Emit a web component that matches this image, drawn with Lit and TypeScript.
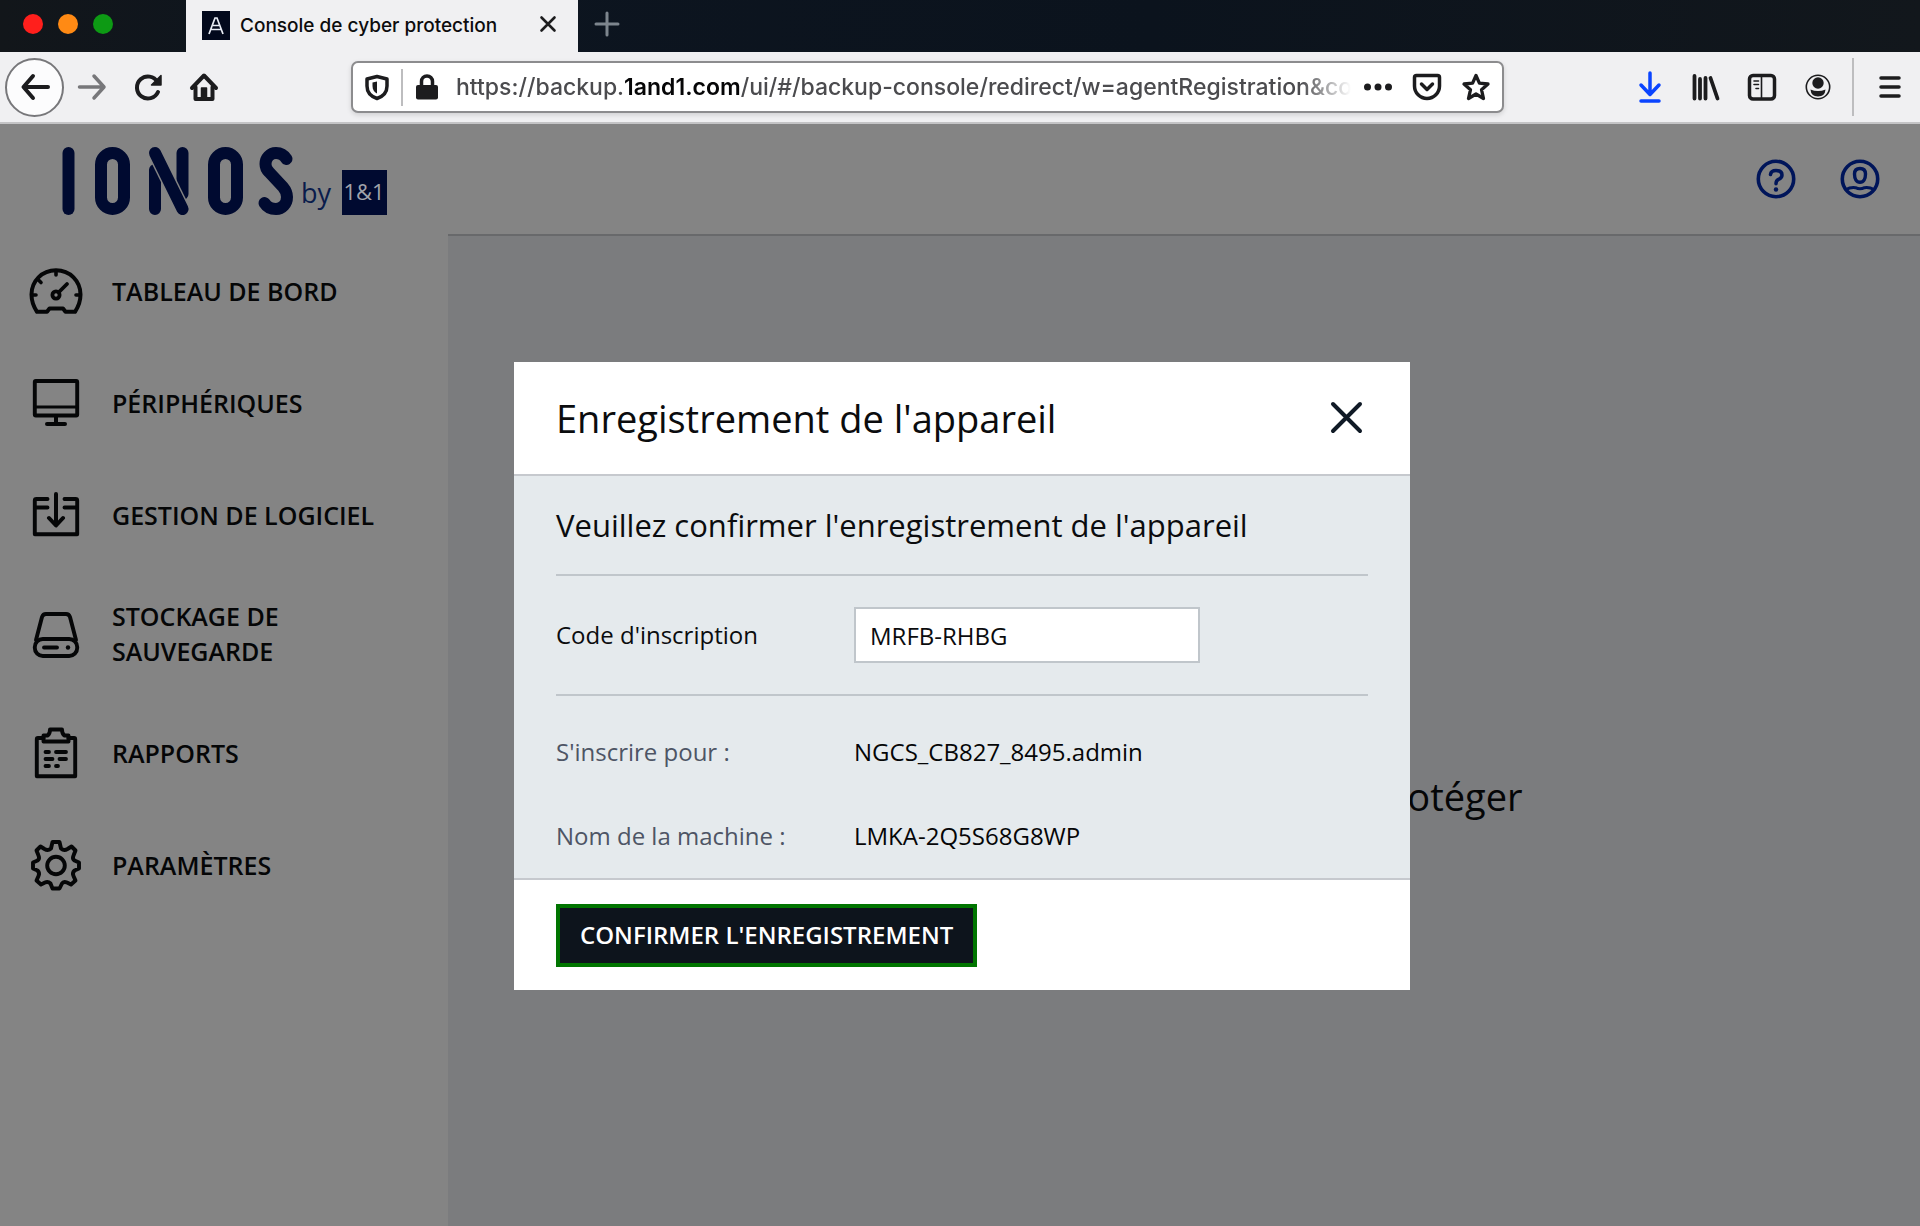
import { LitElement, html, css, svg } from "lit";
import { customElement, state } from "lit/decorators.js";

const icons = {
  back: svg`<path d="M27 14H3M12 3 2.500 14 12 25" stroke-width="4"/>`,
  forward: svg`<path d="M1.500 14H25M16 3 26 14 16 25" stroke-width="3.500"/>`,
  reload: svg`<path d="M24 19A11 11 0 1 1 23.500 9" stroke-width="4"/><path d="M27 2.500V12H17.500Z" fill="currentColor" stroke-width="1.500"/>`,
  home: svg`<path d="M2 15 14 2.500 26 15" stroke-width="4"/><path d="M5.500 14V26H22.500V14" stroke-width="4"/><path d="M11.500 26V15H16.500V26" fill="currentColor" stroke-width="1.500"/>`,
  shield: svg`<path d="M14 3.500 24 6V13C24 19 20 23.500 14 25.500 8 23.500 4 19 4 13V6Z" stroke-width="3.500"/><path d="M14 8.500 9.500 9.500V13C9.500 16.500 11 19 14 20.500Z" fill="currentColor" stroke="none"/>`,
  lock: svg`<rect x="3" y="12" width="22" height="14.500" rx="2" fill="currentColor" stroke="none"/><path d="M8.500 13V8.500A5.500 5.500 0 0 1 19.500 8.500V13" stroke-width="3.500"/>`,
  dots: svg`<g fill="currentColor" stroke="none"><circle cx="3.500" cy="14" r="3.500"/><circle cx="14" cy="14" r="3.500"/><circle cx="24.500" cy="14" r="3.500"/></g>`,
  pocket: svg`<path d="M3.500 2.500H24.500Q26.500 2.500 26.500 4.500V13A12.500 12.500 0 0 1 1.500 13V4.500Q1.500 2.500 3.500 2.500Z" stroke-width="3.500"/><path d="M8.500 11 14 16.500 19.500 11" stroke-width="3.500"/>`,
  star: svg`<path d="M14 2.500 17.400 10.200 26 11 19.500 16.700 21.500 25.500 14 21 6.500 25.500 8.500 16.700 2 11 10.600 10.200Z" stroke-width="3.300"/>`,
  download: svg`<path d="M14 0V20M5 12 14 21.500 23 12M5 28H23" stroke-width="3.500"/>`,
  library: svg`<path d="M2.500 3V25.500M8 6V25.500M13.500 5V25.500M18.500 5 25.500 25.500" stroke-width="3.800"/>`,
  sidebar: svg`<rect x="1.500" y="2.500" width="25" height="23.500" rx="3.500" stroke-width="3.500"/><path d="M13.500 3V26" stroke-width="1.600"/><path d="M6 8H10.500M6 11.500H10.500M8 15.500H10.500" stroke-width="1.600"/>`,
  account: svg`<circle cx="14" cy="14" r="11.700" stroke-width="1.600"/><circle cx="14" cy="10" r="5.700" fill="currentColor" stroke="none"/><path d="M6.500 16.500Q10 18 14 18T21.500 16.500Q21 23.500 14 23.500T6.500 16.500Z" fill="currentColor" stroke="none"/>`,
  menu: svg`<path d="M5 5H23M5 14H23M5 23H23" stroke-width="3.500"/>`,
  close: svg`<path d="M7.500 6.500 20.500 19.500M20.500 6.500 7.500 19.500" stroke-width="2.600"/>`,
  plus: svg`<path d="M14 3V25M3 14H25" stroke-width="3"/>`,
  help: svg`<circle cx="20" cy="20" r="17.700" stroke-width="3.600"/><path d="M14.500 15.500Q15 11.500 20 11.500 26 11.500 26 16 26 19 22.500 20.300 20 21.500 20 24.800" stroke-width="3.500"/><circle cx="20" cy="30.500" r="2.200" fill="currentColor" stroke="none"/>`,
  user: svg`<circle cx="20" cy="20" r="17.700" stroke-width="3.600"/><path d="M20 9.500C23.500 9.500 25.500 11.500 25.500 15 25.500 20 23.500 23.300 20 23.300S14.500 20 14.500 15C14.500 11.500 16.500 9.500 20 9.500Z" stroke-width="3.400"/><path d="M6 30.500Q10.500 28 15.500 28.700 20 31 24.500 28.700 29.500 28 34 30.500" stroke-width="3"/>`,
  dashboard: svg`<path d="M28 7.200C42 7.200 52.500 18 52.500 31.500 52.500 38 50.500 43.500 47 48.800H37.500L35 45.500H21.500L19 48.800H9C5.500 43.500 3.500 38 3.500 31.500 3.500 18 14 7.200 28 7.200Z" stroke-width="4"/><path d="M28 8V12M10 16.500 13 19.500M4 32H8M48 32H52" stroke-width="3.600"/><circle cx="28" cy="32" r="3.600" stroke-width="3.800"/><path d="M31 29 39 21" stroke-width="3.800"/>`,
  devices: svg`<rect x="6.800" y="6" width="42.400" height="34.500" rx="1" stroke-width="3.900"/><path d="M7 32H49" stroke-width="3"/><path d="M28 41V49M19 49H37" stroke-width="4"/>`,
  software: svg`<path d="M19.500 12H8.500Q6.800 12 6.800 13.500V47.200H49.200V13.500Q49.200 12 47.500 12H36.500M7 20.500H19.500M36.500 20.500H49" stroke-width="3.900"/><path d="M28 7V37M21 31 28 38.500 35 31" stroke-width="4"/>`,
  storage: svg`<path d="M8 34 14 11Q15 8 18 8H38Q41 8 42 11L48 34" stroke-width="3.900"/><rect x="6.800" y="33" width="42.400" height="17" rx="8" stroke-width="3.900"/><path d="M16 41.500H29" stroke-width="3.800"/><circle cx="40" cy="41.500" r="2.200" fill="currentColor" stroke="none"/>`,
  reports: svg`<path d="M15.500 13H10Q8.800 13 8.800 14.200V51.200H47.200V14.200Q47.200 13 46 13H40.500" stroke-width="3.900"/><path d="M15.500 16.500V10.500H19.500Q22 9 22 4.500H34Q34 9 36.500 10.500H40.500V16.500Z" stroke-width="3.900"/><path d="M17.500 27H21M28 27H38M17.500 34H24.500M31.500 34H38M17.500 41H21M28 41H30" stroke-width="3.800"/>`,
  settings: svg`<path d="M24.500 5H31.500L33 11.500Q36 14 39.500 12L43.500 9.500 47.500 13.500 45.500 18.500Q44 22 46.500 23.500L51 25.500V31.500L46.500 33.500Q44 36 45.500 39L47.500 43.500 43 47.500 39 45.500Q35.500 44 34 46.500L31.500 51.500H24.500L22.500 46.500Q20 44 17 45.500L13 47.500 8.500 43.500 10.500 39Q12 36 9.500 33.500L5 31.500V25.500L9.500 23.500Q12 22 10.500 18.500L8.500 13.500 12.500 9.500 16.500 12Q20 14 23 11.500Z" stroke-width="3.900"/><circle cx="28" cy="28.500" r="8.800" stroke-width="3.900"/>`,
};

type IconName = keyof typeof icons;

function icon(name: IconName, size = 28) {
  return html`<svg class="icon" width=${size} height=${size} viewBox="0 0 ${size} ${size}" aria-hidden="true">${icons[name]}</svg>`;
}

const navItems: { icon: IconName; label: string }[] = [
  { icon: "dashboard", label: "TABLEAU DE BORD" },
  { icon: "devices", label: "PÉRIPHÉRIQUES" },
  { icon: "software", label: "GESTION DE LOGICIEL" },
  { icon: "storage", label: "STOCKAGE DE SAUVEGARDE" },
  { icon: "reports", label: "RAPPORTS" },
  { icon: "settings", label: "PARAMÈTRES" },
];

const iconStyles = css`
  * { box-sizing: border-box; }
  .icon { display: block; flex: none; fill: none; stroke: currentColor; stroke-linecap: round; stroke-linejoin: round; overflow: visible; }
  button { display: flex; align-items: center; justify-content: center; padding: 0; border: 0; background: none; color: inherit; font: inherit; cursor: pointer; }
`;

@customElement("browser-chrome")
class BrowserChrome extends LitElement {
  static styles = [
    iconStyles,
    css`
      :host { display: block; flex: none; font-family: Inter, "Liberation Sans", sans-serif; color: #1c1c1e; }
      .strip { display: flex; align-items: stretch; height: 52px; background: linear-gradient(90deg, #12161a, #0d1520 20%, #0b131d 60%, #12171c); }
      .lights { display: flex; align-items: center; gap: 15px; width: 186px; padding: 0 0 4px 23px; }
      .light { width: 20px; height: 20px; border-radius: 50%; }
      .red { background: #ff1f1c; }
      .amber { background: #ff8a14; }
      .green { background: #0d9a14; }
      .tab { display: flex; align-items: center; width: 392px; padding: 0 16px 2px; gap: 10px; background: #f0f0f2; }
      .title { flex: 1; font-size: 19px; font-weight: 500; white-space: nowrap; color: #0c0c0d; }
      .new { width: 58px; padding-bottom: 4px; color: #7d858d; }
      .bar { display: flex; align-items: center; height: 72px; background: #f0f0f2; border-bottom: 2px solid #c4c4c6; padding: 0 16px 0 5px; }
      .back { width: 59px; height: 59px; border: 2px solid #77777a; border-radius: 50%; background: #fcfcfd; }
      .tools { display: flex; flex: none; align-items: center; gap: 28px; }
      .history { width: 346px; gap: 0; }
      .step { width: 56px; height: 56px; }
      .disabled { color: #77777a; }
      .address { display: flex; align-items: center; flex: 1; min-width: 0; height: 52px; padding: 0 12px 0 10px; border: 2px solid #8c8c8e; border-radius: 7px; background: #fff; box-shadow: 0 2px 5px #0002; }
      .split { width: 2px; height: 37px; margin: 0 10px; background: #bdbdbf; }
      .url { flex: 1; min-width: 0; margin: 0 13px 0 15px; overflow: hidden; white-space: nowrap; font-size: 23px; font-weight: 500; color: #4b4b4e; outline: 0; -webkit-mask-image: linear-gradient(90deg, #000 calc(100% - 50px), transparent); mask-image: linear-gradient(90deg, #000 calc(100% - 50px), transparent); }
      .domain { font-weight: 600; color: #060607; }
      .inner { gap: 21px; }
      .right { padding-left: 132px; gap: 28px; }
      .download { color: #0a44ff; }
      .line { width: 2px; height: 58px; background: #bdbdbf; margin: 0 -6px 0 -8px; }
    `,
  ];

  render() {
    return html`
      <div class="strip">
        <div class="lights"><span class="light red"></span><span class="light amber"></span><span class="light green"></span></div>
        <div class="tab">
          <svg width="28" height="29" viewBox="0 0 28 29" aria-hidden="true">
            <rect width="28" height="29" fill="#02091c" />
            <path d="M7 23 13 7H15L21 23M9 18.500H19M11 14.500H17" fill="none" stroke="#e8ecf4" stroke-width="1.700" />
          </svg>
          <span class="title">Console de cyber protection</span>
          <button aria-label="Fermer l'onglet">${icon("close")}</button>
        </div>
        <button class="new" aria-label="Nouvel onglet">${icon("plus")}</button>
      </div>
      <div class="bar">
        <div class="tools history">
          <button class="back" aria-label="Précédent">${icon("back")}</button>
          <button class="step disabled" aria-label="Suivant">${icon("forward")}</button>
          <button class="step" aria-label="Actualiser">${icon("reload")}</button>
          <button class="step" aria-label="Accueil">${icon("home")}</button>
        </div>
        <div class="address">
          ${icon("shield")}<span class="split"></span>${icon("lock")}
          <div class="url" role="textbox" tabindex="0" aria-label="Adresse">https://backup.<span class="domain">1and1.com</span>/ui/#/backup-console/redirect/w=agentRegistration&amp;co</div>
          <div class="tools inner">
            <button aria-label="Actions">${icon("dots")}</button>
            <button aria-label="Pocket">${icon("pocket")}</button>
            <button aria-label="Marque-page">${icon("star")}</button>
          </div>
        </div>
        <div class="tools right">
          <button class="download" aria-label="Téléchargements">${icon("download")}</button>
          <button aria-label="Bibliothèque">${icon("library")}</button>
          <button aria-label="Panneau latéral">${icon("sidebar")}</button>
          <button aria-label="Compte">${icon("account")}</button>
          <span class="line"></span>
          <button aria-label="Menu">${icon("menu")}</button>
        </div>
      </div>
    `;
  }
}

@customElement("side-nav")
class SideNav extends LitElement {
  static styles = [
    iconStyles,
    css`
      :host { display: block; width: 448px; flex: none; background: #848484; }
      .logo { display: block; width: 448px; height: 111px; }
      .by { font: 500 27px "Open Sans", sans-serif; fill: #0a1c4c; }
      .badge { font: 500 22px "Open Sans", sans-serif; fill: #a0a3ab; }
      .item { display: flex; align-items: center; gap: 28px; min-height: 112px; padding: 28px 64px 28px 28px; color: #050607; font: 600 25px/35px "Open Sans", sans-serif; text-decoration: none; }
    `,
  ];

  render() {
    return html`
      <svg class="logo" viewBox="0 0 448 111" role="img" aria-label="IONOS by 1&amp;1">
        <g fill="none" stroke="#000a30" stroke-width="12" stroke-linecap="round" stroke-linejoin="round">
          <path d="M68.500 29V85" />
          <rect x="101" y="29" width="23" height="56" rx="11.500" />
          <path d="M155 46V85M182.500 29V70" />
          <path d="M155 29 182.500 85" stroke="#848484" stroke-width="15" stroke-linecap="butt" />
          <path d="M155 29 182.500 85" />
          <rect x="214" y="29" width="23" height="56" rx="11.500" />
          <path d="M286.500 35C284 31 280 29 276 29C270 29 265.500 34 265.500 40C265.500 43 267 46 269 48L283 63C285.500 66 287 69 287 73C287 80 282 85 276 85C271 85 267 83 264.500 79" />
        </g>
        <text class="by" x="301" y="79">by</text>
        <rect x="342" y="46" width="45" height="45" fill="#000a30" />
        <text class="badge" x="364" y="76" text-anchor="middle">1&amp;1</text>
      </svg>
      <nav>
        ${navItems.map((item) => html`<a class="item" href="#">${icon(item.icon, 56)}<span>${item.label}</span></a>`)}
      </nav>
    `;
  }
}

@customElement("registration-dialog")
class RegistrationDialog extends LitElement {
  @state() private code = "MRFB-RHBG";

  static styles = [
    iconStyles,
    css`
      :host { display: block; width: 896px; background: #fff; color: #0b0c0e; font: 500 24px/34px "Open Sans", sans-serif; }
      .head { display: flex; align-items: center; justify-content: space-between; height: 114px; padding: 0 42px; border-bottom: 2px solid #c6c9ce; }
      h1, h2, dl, dd { margin: 0; font-weight: 500; }
      h1 { font-size: 38px; line-height: 56px; }
      h2 { padding: 28px 0; font-size: 31px; line-height: 42px; border-bottom: 2px solid #c0c6cb; }
      .close { width: 42px; height: 42px; color: #101a26; }
      .body { padding: 0 42px; background: #e5eaed; border-bottom: 2px solid #c6c9ce; }
      .row { display: grid; grid-template-columns: 298px 1fr; align-items: center; height: 84px; }
      .code { height: 120px; border-bottom: 2px solid #c0c6cb; }
      .input { width: 346px; height: 56px; padding: 0 14px; border: 2px solid #c0c6cb; border-radius: 0; background: #fff; color: inherit; font: inherit; outline: 0; }
      .list { padding-top: 14px; }
      dt { color: #4e5565; }
      dd { color: #050607; }
      .foot { display: flex; align-items: center; height: 110px; padding: 0 42px; }
      .confirm { height: 63px; padding: 0 20px; border: 4px solid #007500; background: #0d141c; color: #fff; font-weight: 600; font-size: 24px; white-space: nowrap; }
    `,
  ];

  render() {
    return html`
      <div class="head">
        <h1>Enregistrement de l'appareil</h1>
        <button class="close" aria-label="Fermer">
          <svg class="icon" width="42" height="42" viewBox="0 0 42 42" aria-hidden="true"><path d="M7 7 34 34M34 7 7 34" stroke-width="4" /></svg>
        </button>
      </div>
      <div class="body">
        <h2>Veuillez confirmer l'enregistrement de l'appareil</h2>
        <div class="row code">
          <label for="code">Code d'inscription</label>
          <input class="input" id="code" type="text" .value=${this.code} @input=${(e: Event) => (this.code = (e.target as HTMLInputElement).value)} />
        </div>
        <dl class="list">
          <div class="row"><dt>S'inscrire pour :</dt><dd>NGCS_CB827_8495.admin</dd></div>
          <div class="row"><dt>Nom de la machine :</dt><dd>LMKA-2Q5S68G8WP</dd></div>
        </dl>
      </div>
      <div class="foot"><button class="confirm">CONFIRMER L'ENREGISTREMENT</button></div>
    `;
  }
}

@customElement("app-root")
class AppRoot extends LitElement {
  static styles = [
    iconStyles,
    css`
      :host { display: flex; flex-direction: column; min-height: 100vh; }
      .page { position: relative; display: flex; flex: 1; background: #7b7c7e; }
      .content { display: flex; flex: 1; flex-direction: column; min-width: 0; }
      .top { display: flex; align-items: center; justify-content: flex-end; gap: 44px; height: 112px; padding: 0 40px 0 0; background: #848484; border-bottom: 2px solid #68696b; color: #00155a; }
      .main { display: flex; flex: 1; align-items: center; justify-content: flex-end; padding: 130px 27% 0 0; color: #050607; font: 400 38px/56px "Open Sans", sans-serif; }
      .message { margin: 0; }
      .overlay { position: absolute; inset: 0; display: flex; align-items: center; justify-content: center; padding: 2px 0 0 4px; }
    `,
  ];

  render() {
    return html`
      <browser-chrome></browser-chrome>
      <div class="page">
        <side-nav></side-nav>
        <div class="content">
          <header class="top">
            <button aria-label="Aide">${icon("help", 40)}</button>
            <button aria-label="Mon compte">${icon("user", 40)}</button>
          </header>
          <main class="main"><p class="message">protéger</p></main>
        </div>
        <div class="overlay">
          <registration-dialog role="dialog" aria-modal="true" aria-label="Enregistrement de l'appareil"></registration-dialog>
        </div>
      </div>
    `;
  }
}
